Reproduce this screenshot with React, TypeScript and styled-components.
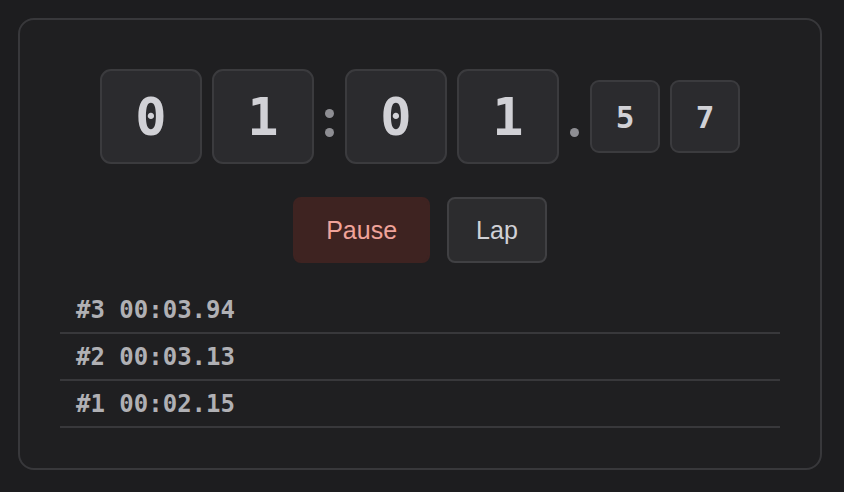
import styled, { createGlobalStyle } from "styled-components";

const GlobalStyle = createGlobalStyle`
    html, body {
        margin: 0;
        padding: 0;
        background: #1d1d1f;
    }
    body {
        font-family: "Liberation Sans", Arial, sans-serif;
    }
`;

const Page = styled.div`
    padding: 18px 22px 22px 18px;
    box-sizing: border-box;
    width: 844px;
    height: 492px;
`;

const Card = styled.div`
    box-sizing: border-box;
    width: 804px;
    height: 452px;
    border: 2px solid #38383b;
    border-radius: 16px;
    background: #1f1f21;
    padding: 49px 40px 0;
    display: flex;
    flex-direction: column;
    align-items: center;
`;

const Display = styled.div`
    display: flex;
    align-items: center;
    gap: 10px;
    height: 95px;
`;

interface DigitProps {
    $small?: boolean;
}

const Digit = styled.div<DigitProps>`
    box-sizing: border-box;
    width: ${p => (p.$small ? "70px" : "102px")};
    height: ${p => (p.$small ? "73px" : "95px")};
    border: 2px solid #3b3b3e;
    border-radius: ${p => (p.$small ? "9px" : "11px")};
    background: #2b2b2e;
    color: #d1d1d6;
    font-family: "DejaVu Sans Mono", monospace;
    font-variant-numeric: slashed-zero;
    font-weight: bold;
    font-size: ${p => (p.$small ? "31px" : "52px")};
    display: flex;
    align-items: center;
    justify-content: center;
`;

// separators between the digit groups
const Colon = styled.div`
    width: 11px;
    display: flex;
    flex-direction: column;
    align-items: center;
    gap: 10px;
    margin-top: 12px;

    span {
        width: 9px;
        height: 9px;
        border-radius: 50%;
        background: #8e8e93;
    }
`;

const Dot = styled.div`
    width: 11px;
    display: flex;
    justify-content: center;
    margin-top: 32px;

    span {
        width: 9px;
        height: 9px;
        border-radius: 50%;
        background: #8e8e93;
    }
`;

const Controls = styled.div`
    display: flex;
    gap: 17px;
    margin-top: 33px;
`;

interface ButtonProps {
    $variant: "stop" | "plain";
}

const Button = styled.button<ButtonProps>`
    box-sizing: border-box;
    height: 66px;
    padding: 0 ${p => (p.$variant === "stop" ? "31px" : "27px")};
    border-radius: 8px;
    font-family: "Liberation Sans", Arial, sans-serif;
    font-size: 25px;
    cursor: pointer;
    border: 2px solid ${p => (p.$variant === "stop" ? "#3e2321" : "#404043")};
    background: ${p => (p.$variant === "stop" ? "#3e2321" : "#2c2c2e")};
    color: ${p => (p.$variant === "stop" ? "#f0a39a" : "#d1d1d6")};
`;

const LapList = styled.ul`
    list-style: none;
    margin: 24px 0 0;
    padding: 0;
    align-self: stretch;
`;

const LapRow = styled.li`
    height: 47px;
    box-sizing: border-box;
    border-bottom: 2px solid #38383b;
    padding: 0 16px;
    display: flex;
    align-items: center;
    white-space: pre;
    font-family: "DejaVu Sans Mono", monospace;
    font-weight: bold;
    font-size: 24px;
    color: #b0b0b4;
`;

const laps = [
    { n: 3, t: "00:03.94" },
    { n: 2, t: "00:03.13" },
    { n: 1, t: "00:02.15" },
];

export default function App() {
    return (
        <>
            <GlobalStyle />
            <Page>
                <Card>
                    <Display>
                        <Digit>0</Digit>
                        <Digit>1</Digit>
                        <Colon><span /><span /></Colon>
                        <Digit>0</Digit>
                        <Digit>1</Digit>
                        <Dot><span /></Dot>
                        <Digit $small>5</Digit>
                        <Digit $small>7</Digit>
                    </Display>
                    <Controls>
                        <Button $variant="stop">Pause</Button>
                        <Button $variant="plain">Lap</Button>
                    </Controls>
                    <LapList>
                        {laps.map(l => (
                            <LapRow key={l.n}>{`#${l.n} ${l.t}`}</LapRow>
                        ))}
                    </LapList>
                </Card>
            </Page>
        </>
    );
}
